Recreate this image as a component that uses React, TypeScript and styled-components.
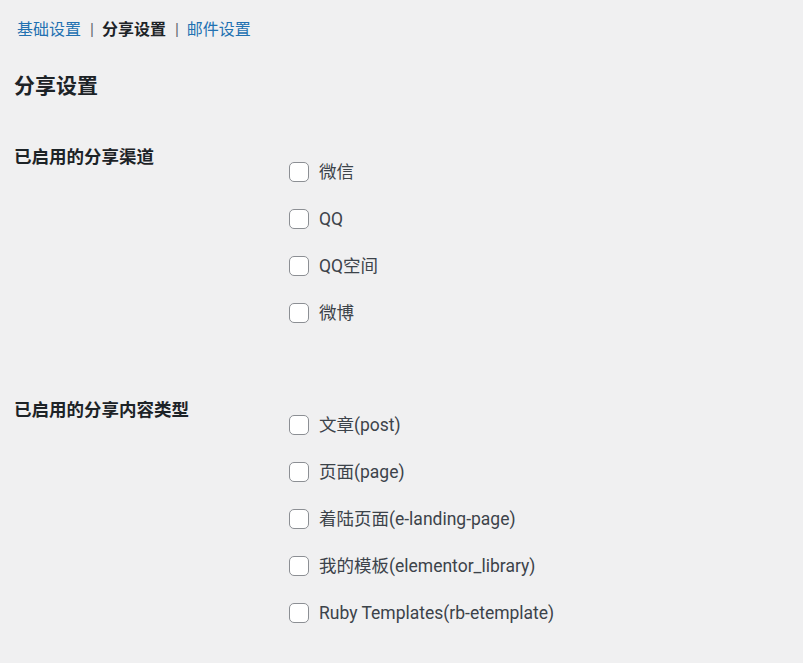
import React from "react";
import styled, { createGlobalStyle } from "styled-components";

const Global = createGlobalStyle`
  html, body { margin: 0; padding: 0; background: #f0f0f1; }
  body {
    font-family: Roboto, "Noto Sans CJK SC", sans-serif;
    color: #3c434a;
  }
`;

const Page = styled.div`
  padding: 18px 0 0 14px;
`;

const Nav = styled.div`
  display: flex;
  align-items: center;
  gap: 8px;
  padding-left: 3px;
  height: 24px;
  font-size: 16px;
  line-height: 24px;
`;

const NavLink = styled.a<{ $current?: boolean }>`
  color: ${(p) => (p.$current ? "#1d2327" : "#2271b1")};
  font-weight: ${(p) => (p.$current ? 600 : 400)};
  text-decoration: none;
`;

const Sep = styled.span`
  color: #646970;
  padding-left: 1px;
`;

const Title = styled.h2`
  margin: 31px 0 0 0;
  font-size: 21px;
  line-height: 26px;
  font-weight: 600;
  color: #1d2327;
`;

const Section = styled.div<{ $top: number }>`
  display: grid;
  grid-template-columns: 275px 1fr;
  margin-top: ${(p) => p.$top}px;
`;

const Label = styled.div`
  font-size: 17.5px;
  line-height: 24px;
  font-weight: 700;
  color: #1d2327;
`;

const Options = styled.div`
  display: flex;
  flex-direction: column;
  gap: 23px;
  padding-top: 15px;
`;

const Option = styled.label`
  display: flex;
  align-items: center;
  gap: 10px;
  height: 24px;
  font-size: 17.5px;
  line-height: 24px;
  color: #3c434a;
`;

const Box = styled.span`
  width: 20px;
  height: 20px;
  box-sizing: border-box;
  border: 1.25px solid #8c8f94;
  border-radius: 5px;
  background: #fff;
  flex: none;
`;

const channels = ["微信", "QQ", "QQ空间", "微博"];
const types = [
  "文章(post)",
  "页面(page)",
  "着陆页面(e-landing-page)",
  "我的模板(elementor_library)",
  "Ruby Templates(rb-etemplate)",
];

export default function App() {
  return (
    <>
      <Global />
      <Page>
        <Nav>
          <NavLink href="#">基础设置</NavLink>
          <Sep>|</Sep>
          <NavLink $current>分享设置</NavLink>
          <Sep>|</Sep>
          <NavLink href="#">邮件设置</NavLink>
        </Nav>
        <Title>分享设置</Title>
        <Section $top={46}>
          <Label>已启用的分享渠道</Label>
          <Options>
            {channels.map((c) => (
              <Option key={c}>
                <Box />
                {c}
              </Option>
            ))}
          </Options>
        </Section>
        <Section $top={73}>
          <Label>已启用的分享内容类型</Label>
          <Options>
            {types.map((c) => (
              <Option key={c}>
                <Box />
                {c}
              </Option>
            ))}
          </Options>
        </Section>
      </Page>
    </>
  );
}
